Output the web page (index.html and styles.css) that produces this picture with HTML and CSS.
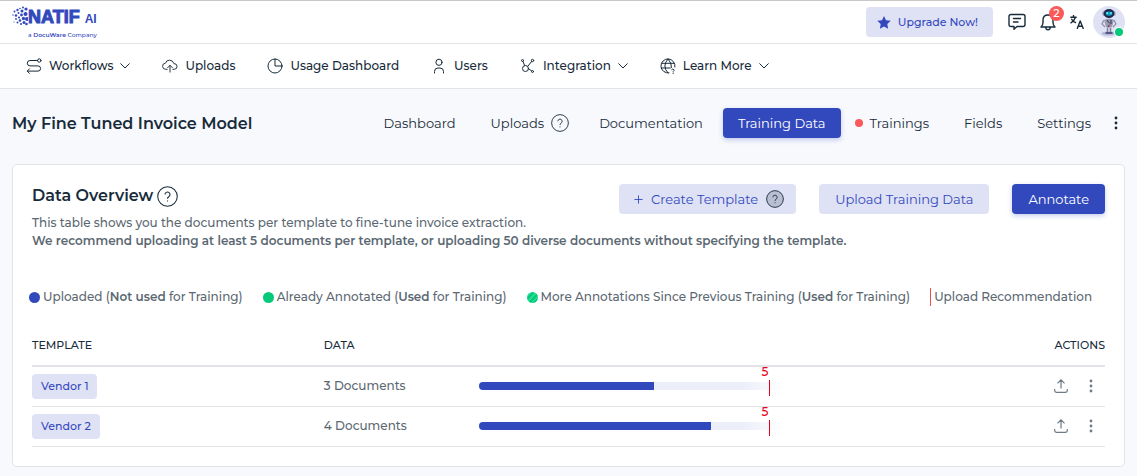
FILE: index.html
```html
<!DOCTYPE html>
<html lang="en">
<head>
<meta charset="utf-8">
<meta name="viewport" content="width=device-width, initial-scale=1">
<title>My Fine Tuned Invoice Model</title>
<link rel="stylesheet" href="styles.css">
</head>
<body>
<svg class="sprite" aria-hidden="true">
  <symbol id="chevron" viewBox="0 0 10 6"><path d="M.7.7 5 5 9.3.7"/></symbol>
  <symbol id="help" viewBox="0 0 20 20"><circle cx="10" cy="10" r="9.3"/><path d="M7.6 8.1a2.4 2.4 0 1 1 3.6 2.1c-.8.5-1.2.9-1.2 1.9M10 13.8v1"/></symbol>
  <symbol id="dots" viewBox="0 0 4 14"><circle cx="2" cy="2" r="1.4"/><circle cx="2" cy="7" r="1.4"/><circle cx="2" cy="12" r="1.4"/></symbol>
  <symbol id="upload" viewBox="0 0 14 14"><path d="M7 9.500V1M3.500 4.300 7 .8l3.500 3.500M.7 10v1.600q0 1.700 1.700 1.700h9.200q1.700 0 1.700-1.700V10"/></symbol>
</svg>

<header class="topbar">
  <a class="logo" href="#" aria-label="Natif AI, a DocuWare Company">
    <svg class="logo-dots" viewBox="0 0 16 21" aria-hidden="true">
      <circle cx="14" cy="3" r="1.6"/><circle cx="11" cy="1.500" r="1"/><circle cx="8" cy="2.500" r=".8"/><circle cx="10" cy="5" r="1.500"/><circle cx="5.500" cy="4" r="1.200"/><circle cx="2.500" cy="5.500" r="1"/><circle cx="6.500" cy="7" r="1"/><circle cx="13.500" cy="8" r="2"/><circle cx="9.500" cy="9" r="1.400"/><circle cx="4" cy="9.500" r="1.300"/><circle cx="1" cy="9" r=".7"/><circle cx="7" cy="11.500" r="1.100"/><circle cx="11.500" cy="12.500" r="1.700"/><circle cx="15" cy="13" r="2"/><circle cx="4" cy="13" r=".9"/><circle cx="8" cy="14.500" r="1.300"/><circle cx="5.500" cy="16.500" r="1"/><circle cx="12" cy="16.500" r="1.500"/><circle cx="9" cy="18" r="1"/><circle cx="14.500" cy="18" r="1.300"/><circle cx="2" cy="16" r=".6"/>
    </svg>
    <span class="logo-copy">
      <span class="logo-name">NATIF <small>AI</small></span>
      <span class="logo-tag">a <b>DocuWare</b> Company</span>
    </span>
  </a>
  <div class="account">
    <button class="upgrade" type="button">
      <svg width="14" height="13" viewBox="0 0 14 13" aria-hidden="true"><path d="m7 0 2 4.200 4.700.6-3.400 3.300.8 4.700L7 10.600l-4.100 2.200.8-4.700L.3 4.800 5 4.200z"/></svg>
      Upgrade Now!
    </button>
    <button class="icon-btn" type="button" aria-label="Messages">
      <svg class="line" width="18" height="18" viewBox="0 0 18 18"><path d="M3 1.500h12q2 0 2 2v8q0 2-2 2H9l-3 2.800v-2.800H3q-2 0-2-2v-8q0-2 2-2zM5.500 5.500h7M5.500 9h4.500"/></svg>
    </button>
    <button class="icon-btn" type="button" aria-label="Notifications, 2 unread">
      <svg class="line" width="18" height="18" viewBox="0 0 18 18"><path d="M2 14h14q-2-2-2-4.500V7Q14 2 9 2T4 7v2.500Q4 12 2 14zM6.700 14.500q.3 2.300 2.300 2.300t2.300-2.300"/></svg>
      <span class="badge">2</span>
    </button>
    <button class="icon-btn language" type="button" aria-label="Language">
      <svg class="line" width="14" height="14" viewBox="0 0 14 14"><path d="M.8 2.300h5.400M3.500.5v1.800M5.500 2.300Q4.500 5.500 1 7.800M1.700 4.300Q3 7 5.500 7.500M7.300 13.500 10.200 6l3 7.500M8.300 11.300h3.800"/></svg>
    </button>
    <button class="avatar" type="button" aria-label="Profile">
      <svg width="32" height="32" viewBox="0 0 32 32">
        <circle cx="16" cy="16" r="16" fill="#dfe1f5"/>
        <ellipse cx="15.500" cy="27.500" rx="7" ry="2" fill="#b6b9d3"/>
        <rect x="9.500" y="5" width="13" height="5" rx="2" fill="#868ba5"/>
        <ellipse cx="16" cy="7.500" rx="5.200" ry="4.500" fill="#20264c"/>
        <path d="M12.500 6.500q3.500-2 7 0l-.5 2.500q-3 1.500-6 0z" fill="#149fc0"/>
        <circle cx="14.200" cy="7" r=".9" fill="#5ff3f4"/><circle cx="18" cy="7" r=".9" fill="#5ff3f4"/>
        <path d="M11 14q5-3 10 0l-2 7h-6z" fill="#989cb3"/>
        <path d="M11 14 9 18l3 3M21 14l2 4-3 3" fill="none" stroke="#8c91aa" stroke-width="1.200"/>
        <path d="m14 14 3 4-2 3M18 14v4" fill="none" stroke="#2d3157"/>
        <path d="m16 17 1.500 3-2 2" fill="none" stroke="#d57982"/>
        <path d="M14.500 21.500v5M17.500 21.500v5" stroke="#7c81a0" stroke-width="1.500"/>
        <path d="M12.500 27h7" stroke="#363b70" stroke-width="1.500"/>
      </svg>
      <span class="online"></span>
    </button>
  </div>
</header>

<nav class="mainnav" aria-label="Main">
  <a href="#"><svg class="line" width="16" height="16" viewBox="0 0 16 16"><path d="M11.500 2.500H4a2.700 2.700 0 0 0 0 5.400h8a2.600 2.600 0 0 1 0 5.200H1.500M3.500 10.800l-2.300 2.300 2.300 2.300"/><circle cx="13.300" cy="2.500" r="1.700"/></svg>Workflows<svg class="line chev"><use href="#chevron"/></svg></a>
  <a href="#"><svg class="line" width="16" height="16" viewBox="0 0 17 16"><path d="M5.500 11.500H4A3.200 3.200 0 0 1 3.700 5Q4.500 1.800 8 1.800t4.700 3.700a3 3 0 0 1 .5 6h-1.700M8.500 14.500v-7M6 9.800l2.500-2.500L11 9.800"/></svg>Uploads</a>
  <a href="#"><svg class="line" width="16" height="16" viewBox="0 0 16 16"><circle cx="8" cy="8" r="7"/><path d="M8 1v7h7"/></svg>Usage Dashboard</a>
  <a href="#"><svg class="line" width="16" height="16" viewBox="0 0 16 16"><circle cx="8" cy="4.300" r="3.100"/><path d="M3.500 15v-1.500q0-3.500 3.500-3.500h2q3.500 0 3.500 3.500V15"/></svg>Users</a>
  <a href="#"><svg class="line" width="16" height="16" viewBox="0 0 16 16"><circle cx="5.500" cy="10.500" r="3"/><circle cx="2.500" cy="2.500" r="1"/><circle cx="12.500" cy="2.500" r="1.200"/><circle cx="12.500" cy="13.500" r="1"/><path d="m3 3.500 1.600 4M11.700 3.400 7.800 8.300M8.500 10.800l3 2"/></svg>Integration<svg class="line chev"><use href="#chevron"/></svg></a>
  <a href="#"><svg class="line" width="16" height="16" viewBox="0 0 16 16"><path d="M9 14.900A7 7 0 1 1 14.900 9M8 1q-6.500 7 0 14M8 1q4 4 3.500 8.500M1.700 5.300h12.600M1.300 10h9M11.800 11.500q1-1 2 0t-.5 2M13.200 15v.5"/></svg>Learn More<svg class="line chev"><use href="#chevron"/></svg></a>
</nav>

<main class="page">
  <div class="model-head">
    <h1>My Fine Tuned Invoice Model</h1>
    <nav class="tabs" aria-label="Model">
      <a href="#">Dashboard</a>
      <a class="with-help" href="#">Uploads <svg class="help-sm"><use href="#help"/></svg></a>
      <a href="#">Documentation</a>
      <a class="active" href="#" aria-current="page">Training Data</a>
      <a class="alert" href="#"><span class="alert-dot"></span>Trainings</a>
      <a href="#">Fields</a>
      <a href="#">Settings</a>
      <button class="more" type="button" aria-label="More"><svg class="dots"><use href="#dots"/></svg></button>
    </nav>
  </div>

  <section class="card">
    <div class="card-head">
      <h2>Data Overview <svg class="help-lg"><use href="#help"/></svg></h2>
      <div class="actions">
        <button class="btn soft create" type="button"><svg class="plus" viewBox="0 0 10 10"><path d="M5 .5v9M.5 5h9"/></svg>Create Template <svg class="help-sm filled"><use href="#help"/></svg></button>
        <button class="btn soft" type="button">Upload Training Data</button>
        <button class="btn primary" type="button">Annotate</button>
      </div>
    </div>
    <p class="intro">This table shows you the documents per template to fine-tune invoice extraction.<br><b>We recommend uploading at least 5 documents per template, or uploading 50 diverse documents without specifying the template.</b></p>

    <ul class="legend">
      <li><span class="dot blue"></span><span>Uploaded (<b>Not used</b> for Training)</span></li>
      <li><span class="dot green"></span><span>Already Annotated (<b>Used</b> for Training)</span></li>
      <li><span class="dot striped"></span><span>More Annotations Since Previous Training (<b>Used</b> for Training)</span></li>
      <li><span class="rule"></span><span>Upload Recommendation</span></li>
    </ul>

    <table class="data">
      <thead>
        <tr><th class="c-template">TEMPLATE</th><th class="c-data">DATA</th><th class="c-bar"></th><th class="c-actions">ACTIONS</th></tr>
      </thead>
      <tbody>
        <tr>
          <td><a class="tag" href="#">Vendor 1</a></td>
          <td>3 Documents</td>
          <td><div class="track"><div class="fill" style="width:56%"></div><span class="goal">5</span></div></td>
          <td><div class="row-actions"><button type="button" aria-label="Upload to Vendor 1"><svg class="up"><use href="#upload"/></svg></button><button type="button" aria-label="More for Vendor 1"><svg class="dots"><use href="#dots"/></svg></button></div></td>
        </tr>
        <tr>
          <td><a class="tag" href="#">Vendor 2</a></td>
          <td>4 Documents</td>
          <td><div class="track"><div class="fill" style="width:74.5%"></div><span class="goal">5</span></div></td>
          <td><div class="row-actions"><button type="button" aria-label="Upload to Vendor 2"><svg class="up"><use href="#upload"/></svg></button><button type="button" aria-label="More for Vendor 2"><svg class="dots"><use href="#dots"/></svg></button></div></td>
        </tr>
      </tbody>
    </table>
  </section>
</main>
</body>
</html>
```
FILE: styles.css
```css
:root {
  --ink: #172b3a;
  --muted: #5b6872;
  --blue: #3249be;
  --soft: #dfe1f5;
  --line: #e3e4e7;
  --green: #04c97a;
  --red: #fa5a5a;
}
* { box-sizing: border-box; }
body {
  margin: 0;
  background: #f8f9fd;
  color: var(--ink);
  font: 500 12px/18px Montserrat, Inter, sans-serif;
}
a { color: inherit; text-decoration: none; }
button { border: 0; padding: 0; background: none; color: inherit; font: inherit; cursor: pointer; }
svg { flex: none; }
.sprite { position: absolute; width: 0; height: 0; }
.line { fill: none; stroke: currentColor; stroke-width: 1; stroke-linecap: round; stroke-linejoin: round; }

.topbar {
  display: flex;
  justify-content: space-between;
  align-items: center;
  height: 44px;
  padding: 0 12px;
  background: #fff;
  border-top: 1px solid #c8c8c8;
  border-bottom: 1px solid var(--line);
}
.logo { display: flex; color: var(--blue); }
.logo-dots { width: 16px; height: 21px; fill: currentColor; }
.logo-copy { display: flex; flex-direction: column; }
.logo-name { font: bold 18px/23px "Liberation Sans Narrow", "Liberation Sans", sans-serif; white-space: nowrap; -webkit-text-stroke: 1px currentColor; }
.logo-name small { font-size: 12px; -webkit-text-stroke: 0; }
.logo-tag { font-size: 6px; line-height: 8px; white-space: nowrap; }

.account { display: flex; align-items: center; }
.upgrade {
  display: flex;
  align-items: center;
  gap: 7px;
  height: 30px;
  margin-right: 15px;
  padding: 0 15px 0 11px;
  border-radius: 4px;
  background: var(--soft);
  color: var(--blue);
  font-size: 11px;
}
.upgrade svg { fill: currentColor; }
.icon-btn { position: relative; display: flex; margin-right: 13px; }
.icon-btn .line { stroke-width: 1.4; }
.language { margin-right: 9px; }
.badge {
  position: absolute;
  top: -7px;
  right: -7px;
  width: 15px;
  height: 15px;
  border-radius: 50%;
  background: var(--red);
  color: #fff;
  font-size: 11px;
  line-height: 15px;
}
.avatar { position: relative; display: flex; }
.online { position: absolute; right: 2px; bottom: 2px; width: 8px; height: 8px; border-radius: 50%; background: var(--green); box-shadow: 0 0 0 1px #fff; }

.mainnav {
  display: flex;
  align-items: center;
  gap: 32px;
  height: 45px;
  padding: 0 26px;
  background: #fff;
  border-bottom: 1px solid var(--line);
}
.mainnav a { display: flex; align-items: center; gap: 7px; white-space: nowrap; }
.chev { width: 10px; height: 6px; }

.page { padding: 19px 12px 9px; }
.model-head { display: flex; justify-content: space-between; align-items: center; }
h1, h2 { margin: 0; padding-top: 1px; font-size: 16px; line-height: 22px; font-weight: 600; white-space: nowrap; }
.tabs { display: flex; align-items: center; gap: 5px; font-size: 13px; font-weight: 400; }
.tabs a { display: flex; align-items: center; gap: 7px; height: 30px; padding: 0 15px; border-radius: 4px; white-space: nowrap; }
.tabs .with-help { padding-right: 10px; }
.tabs .active { background: var(--blue); color: #fff; box-shadow: 0 2px 5px #3249be44; }
.tabs .alert { padding-left: 9px; }
.alert-dot { width: 8px; height: 8px; border-radius: 50%; background: var(--red); }
.help-sm { width: 18px; height: 18px; fill: none; stroke: var(--ink); }
.help-lg { width: 21px; height: 21px; fill: none; stroke: var(--ink); }
.filled { fill: #b9bfd3; }
.more { padding: 0 7px 0 3px; }
.dots { display: block; width: 4px; height: 14px; fill: currentColor; }

.card { margin-top: 26px; padding: 19px 19px 19px; background: #fff; border: 1px solid var(--line); border-radius: 5px; }
.card-head { display: flex; justify-content: space-between; align-items: flex-start; }
h2 { display: flex; align-items: center; gap: 4px; }
.actions { display: flex; gap: 23px; }
.btn { display: flex; align-items: center; height: 30px; padding: 0 16px; border-radius: 4px; font-size: 13px; font-weight: 400; white-space: nowrap; }
.soft { background: var(--soft); color: var(--blue); }
.primary { background: var(--blue); color: #fff; box-shadow: 0 2px 5px #3249be44; }
.create { gap: 8px; padding: 0 12px 0 15px; }
.plus { width: 9px; height: 9px; stroke: currentColor; }

.intro { margin: 0; color: var(--muted); }
b { font-weight: 600; }
.legend { display: flex; gap: 20px; margin: 38px -3px 0; padding: 0; list-style: none; color: var(--muted); white-space: nowrap; }
.legend li { display: flex; align-items: center; gap: 3px; }
.dot { width: 11px; height: 11px; border-radius: 50%; }
.blue { background: var(--blue); }
.green { background: var(--green); }
.striped { background: repeating-linear-gradient(135deg, #04c97a 0 2px, #25dc93 2px 4px); }
.rule { width: 1px; height: 18px; background: #e94f55; }

.data { width: 100%; margin-top: 18px; border-collapse: collapse; table-layout: fixed; color: var(--muted); }
.data th { height: 42px; padding: 0; border-bottom: 2px solid var(--line); color: var(--ink); font-size: 11px; font-weight: 500; text-align: left; }
.data td { height: 40px; padding: 0; border-bottom: 1px solid var(--line); }
.data .c-template { width: 27.2%; }
.data .c-data { width: 14.5%; }
.data .c-bar { width: 29%; }
.data .c-actions { text-align: right; }
.tag { display: inline-block; height: 25px; padding: 0 9px; border-radius: 4px; background: var(--soft); color: var(--blue); font-size: 11px; line-height: 25px; }
.track { position: relative; height: 8px; border-radius: 4px 0 0 4px; background: linear-gradient(90deg, #eceffa 85%, #fff 98%); }
.fill { height: 100%; border-radius: 4px 0 0 4px; background: var(--blue); }
.goal { position: absolute; left: 0; bottom: -6px; width: 93.5%; height: 32px; padding-right: 2px; color: #ee0019; line-height: 16px; text-align: right; }
.goal::after { content: ""; position: absolute; right: 0; bottom: 0; width: 1px; height: 16px; background: currentColor; }
.row-actions { display: flex; justify-content: flex-end; align-items: center; gap: 21px; padding-right: 12px; color: #6e7b86; }
.up { display: block; width: 14px; height: 14px; fill: none; stroke: currentColor; stroke-width: 1.2; }
```
